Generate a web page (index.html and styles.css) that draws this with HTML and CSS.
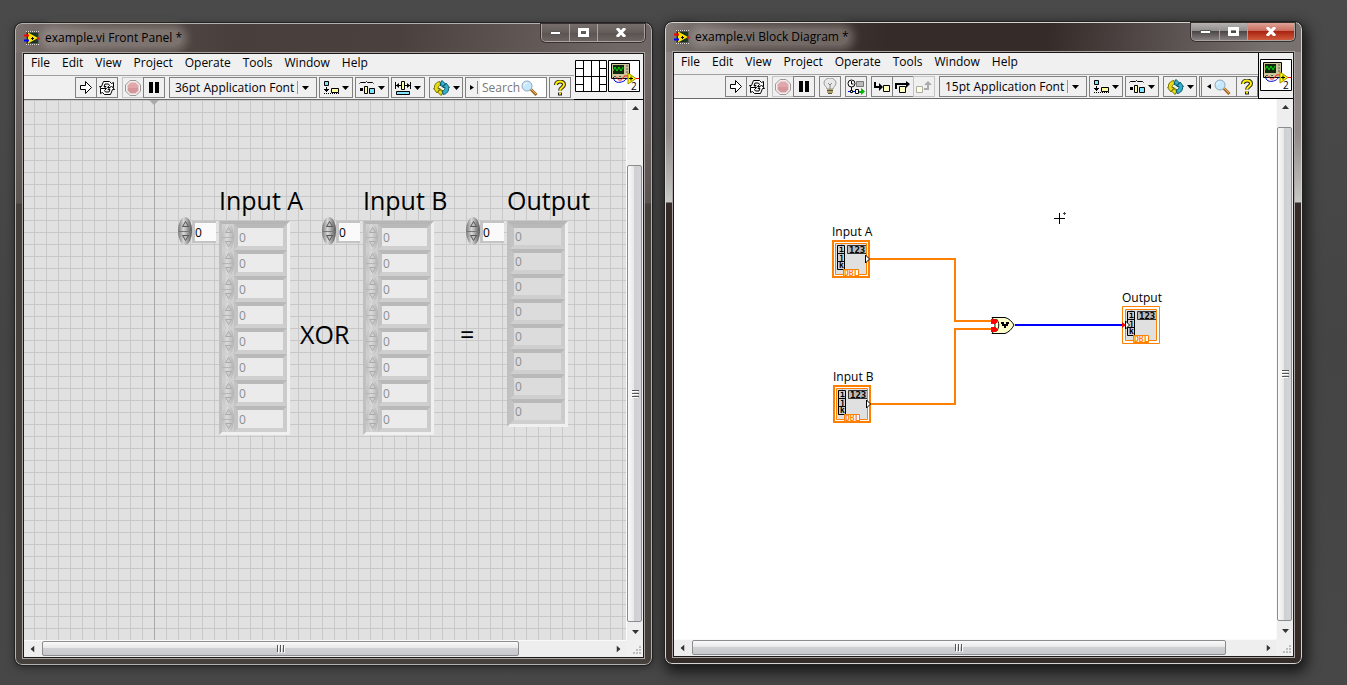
FILE: index.html
```html
<!DOCTYPE html>
<html lang="en">
<head>
    <meta charset="UTF-8">
    <title>example.vi</title>
    <link rel="stylesheet" href="styles.css">
</head>
<body>
<svg class="sprite" aria-hidden="true">
    <symbol id="app" viewBox="0 0 16 14">
        <path d="M2 0h13v14H2z" fill="#555"/>
        <path d="M2 .5h13M2 13.500h13" stroke="#ddd" stroke-dasharray="1 1"/>
        <path d="M3 2h11v10H3z" fill="#14301a"/>
        <path d="M4 1.500l10 5.500-10 5.500z" fill="#ffe500"/>
        <path d="M0 4.500h5M13 7.500h3" stroke="#f00" stroke-width="2"/>
        <path d="M0 9.500h5" stroke="#00f" stroke-width="2"/>
        <path d="M7 7.500h3M8.500 6v3" stroke="#000"/>
    </symbol>
    <symbol id="run" viewBox="0 0 12 13">
        <path d="M.5 4.500h5v-4l6 6-6 6v-4h-5z" fill="#fff" stroke="#000"/>
    </symbol>
    <symbol id="loop" viewBox="0 0 16 14">
        <path d="M.5 5.500h2L4.500.5h6l2 2 2-1v5h-6l2-2-1-1.500H6l-1 2.500h2L3.500 9z" fill="#fff" stroke="#000"/>
        <path d="M15.500 8.500h-2l-2 5h-6l-2-2-2 1v-5h6l-2 2 1 1.500H10l1-2.500H9L12.500 5z" fill="#fff" stroke="#000"/>
    </symbol>
    <symbol id="abort" viewBox="0 0 16 16">
        <path d="M5 .5h6L15.500 5v6L11 15.500H5L.5 11V5z" fill="#f6eeee" stroke="#999"/>
        <path d="M5.500 2.500h5l3 3v5l-3 3h-5l-3-3v-5z" fill="#dfa8ab"/>
        <path d="M3 8h10v2.500L10.500 13h-5L3 10.500z" fill="#d4989c"/>
    </symbol>
    <symbol id="pause" viewBox="0 0 10 11">
        <path d="M0 0h4v11H0zM6 0h4v11H6z" fill="#000"/>
    </symbol>
    <symbol id="bulb" viewBox="0 0 14 17">
        <path d="M4 11C4 9 1 8 1 5a6 5 0 0 1 12 0c0 3-3 4-3 6z" fill="#e9e9e9" stroke="#999"/>
        <path d="M5 5l2 2 2-2M7 7v4" fill="none" stroke="#888"/>
        <path d="M4 11h6v4H4z" fill="#b5a368"/>
        <path d="M4 12.500h6M5 15.500h4" stroke="#554"/>
    </symbol>
    <symbol id="retain" viewBox="0 0 18 16">
        <circle cx="4.500" cy="4.500" r="3.500" fill="#fff" stroke="#000"/>
        <path d="M4.500 2v3h2M4.500 8v5" fill="none" stroke="#000"/>
        <path d="M9.500 2.500h7v5h-7z" fill="#bbb" stroke="#777"/>
        <path d="M1 12.500h11" stroke="#00f"/>
        <path d="M3.500 11.500h2v2h-2zM8.500 10.500h3v4h-3z" fill="#fff" stroke="#000"/>
        <path d="M12 12h2V9l4 3.500-4 3.500v-2h-2z" fill="#00b400"/>
    </symbol>
    <symbol id="into" viewBox="0 0 16 12">
        <path d="M1 1v5h5" fill="none" stroke="#000" stroke-width="2"/>
        <path d="M5 2l4 4-4 4z" fill="#000"/>
        <path d="M9.500 4.500h6v6h-6z" fill="#ffb" stroke="#000"/>
    </symbol>
    <symbol id="over" viewBox="0 0 16 12">
        <path d="M1 8V3h11" fill="none" stroke="#000" stroke-width="2"/>
        <path d="M11 0l4 3-4 4z" fill="#000"/>
        <path d="M4.500 5.500h6v6h-6z" fill="#ffb" stroke="#000"/>
    </symbol>
    <symbol id="out" viewBox="0 0 16 12">
        <path d="M.5 5.500h6v6h-6z" fill="#ffd" stroke="#aaa"/>
        <path d="M8 8h4V4" fill="none" stroke="#aaa" stroke-width="2"/>
        <path d="M8 4l4-4 4 4z" fill="#aaa"/>
    </symbol>
    <symbol id="align" viewBox="0 0 16 14">
        <path d="M1.500.5h4v4h-4z" fill="#7fe5ff" stroke="#000"/>
        <path d="M3.500 6v5M1 8.500h5M2 9.500h3" stroke="#000"/>
        <path d="M1 12.500h15" stroke="#000" stroke-dasharray="1 1"/>
        <path d="M8.500 7.500h7v4h-7z" fill="#ffffa0" stroke="#000"/>
    </symbol>
    <symbol id="spread" viewBox="0 0 16 14">
        <path d="M.5 2.500l1-1h5l1-1 1 1h5l1 1" fill="none" stroke="#000"/>
        <path d="M1 7h3v3H1z" fill="#000"/>
        <path d="M5.500 5.500h3v7h-3z" fill="#ffffa0" stroke="#000"/>
        <path d="M10.500 7.500h5v5h-5z" fill="#7fe5ff" stroke="#000"/>
    </symbol>
    <symbol id="resize" viewBox="0 0 16 14">
        <path d="M.5 1v7M15.500 1v7M1 4.500h5M10 4.500h5" stroke="#000"/>
        <path d="M1 4.500l3-2.500v5zM15 4.500L12 2v5z" fill="#000"/>
        <path d="M6.500.5h3v8h-3z" fill="#ffffa0" stroke="#000"/>
        <path d="M1.500 10.500h13v3h-13z" fill="#7fe5ff" stroke="#000"/>
    </symbol>
    <symbol id="reorder" viewBox="0 0 17 16">
        <path d="M7 1.500C3 2 1 5 1.500 8.500H.5L4 13l3-4.500H5c0-2 1-3 2.500-3.500zM8 15.500L4.500 12 8 9v2c1 0 1.500-.5 1.500-1v3z" fill="#e8dc10" stroke="#7a7200"/>
        <path d="M10 14.500c4-.5 6-3.500 5.500-7h1L13 3l-3 4.500h2c0 2-1 3-2.500 3.500zM9 .5L12.500 4 9 7V5c-1 0-1.500.5-1.500 1V3z" fill="#35b0c8" stroke="#0a5c70"/>
    </symbol>
    <symbol id="lens" viewBox="0 0 17 16">
        <path d="M9.500 9l6 6" stroke="#a06a28" stroke-width="3"/>
        <path d="M10 9l5 5" stroke="#f0b060"/>
        <circle cx="6" cy="6" r="5" fill="#c5e8fb" stroke="#8fa9bd"/>
        <path d="M3 6c0-2 1-3 3-3" fill="none" stroke="#fff"/>
    </symbol>
    <symbol id="help" viewBox="0 0 12 16">
        <path d="M2 5c0-4.500 8-4.500 8-.5 0 3-4 3-4 6M6 12.500v3" fill="none" stroke="#222" stroke-width="4"/>
        <path d="M2 5c0-4.500 8-4.500 8-.5 0 3-4 3-4 6M6 12.500v2" fill="none" stroke="#ffee00" stroke-width="2"/>
    </symbol>
    <symbol id="down" viewBox="0 0 7 4"><path d="M0 0h7L3.500 4z"/></symbol>
    <symbol id="grip" viewBox="0 0 8 8"><path d="M.5 0v7M3.500 0v7M6.500 0v7" stroke="#555"/><path d="M1.500 1v7M4.500 1v7M7.500 1v7" stroke="#fff"/></symbol>
    <symbol id="corner" viewBox="0 0 9 9">
        <path d="M7 0h2v2H7zM7 3h2v2H7zM7 6h2v2H7zM4 3h2v2H4zM4 6h2v2H4zM1 6h2v2H1z" fill="#bdbdbd"/>
    </symbol>
    <symbol id="panes" viewBox="0 0 32 32">
        <path d="M.5.5h31v31H.5zM8.500 0v32M16.500 0v32M24.500 0v32M0 8.500h8M0 16.500h32M0 24.500h8M24 8.500h8M24 24.500h8" fill="#fff" stroke="#000"/>
    </symbol>
    <symbol id="vi" viewBox="0 0 32 32">
        <path d="M.5.5h31v31H.5z" fill="#fff" stroke="#000"/>
        <path d="M3.500 3.500h18v15h-18z" fill="#cfc49a" stroke="#000"/>
        <path d="M5 5h11v9H5z" fill="#102810"/>
        <path d="M5 11l2-4 2 4 2-4 2 4 2-4" fill="none" stroke="#00e000"/>
        <path d="M18 6h2M18 9h2M18 12h2M6 16.500h2M11 16.500h2" stroke="#555"/>
        <path d="M5.500 17c0 5 4 6 8 5s4-3 6-4" fill="none" stroke="#00c"/>
        <path d="M9 17c0 4 5 4 6 1s4-2 5-2M27 18.500h4" fill="none" stroke="#f00"/>
        <path d="M20 13l8 5.500-8 5.500z" fill="#ff0" stroke="#a09000"/>
        <path d="M21 18.500h4M23 16.500v4" stroke="#000"/>
    </symbol>
    <symbol id="terminal" viewBox="0 0 38 38">
        <path d="M4 4h30v30H4z" fill="#e0e0e0"/>
        <path d="M5.500 5.500h7v8h-7zM5.500 13.500h7v8h-7zM5.500 21.500h7v8h-7z" fill="#d0d0d0" stroke="#000"/>
        <path d="M34 5.500H15.500v8H34" fill="#bbb" stroke="#333"/>
        <path d="M3.500 3.500h31v31h-31z" fill="none" stroke="#ff8000"/>
        <path d="M11.500 29.500h15v7h-15z" fill="#fff" stroke="#ff8000"/>
    </symbol>
</svg>

<main class="desktop">
    <section class="window front">
        <header class="titlebar">
            <svg class="app-icon"><use href="#app"/></svg>
            <h1>example.vi Front Panel *</h1>
            <div class="caption">
                <button aria-label="Minimize"><svg width="11" height="4"><path d="M.5.5h10v3H.5z" fill="#fff" stroke="#555"/></svg></button>
                <button aria-label="Maximize"><svg width="11" height="9"><path d="M0 0h11v9H0zM3 3v3h5V3z" fill="#fff" fill-rule="evenodd"/></svg></button>
                <button class="close" aria-label="Close"><svg width="10" height="9"><path d="M1 0l8 9M9 0L1 9" stroke="#fff" stroke-width="3"/></svg></button>
            </div>
        </header>
        <div class="client">
            <div class="head">
                <div class="bars">
                    <nav class="menu">
                        <button>File</button><button>Edit</button><button>View</button><button>Project</button><button>Operate</button><button>Tools</button><button>Window</button><button>Help</button>
                    </nav>
                    <div class="toolbar">
                        <div class="joined">
                            <button class="tool" aria-label="Run"><svg width="12" height="13"><use href="#run"/></svg></button>
                            <button class="tool" aria-label="Run Continuously"><svg width="16" height="14"><use href="#loop"/></svg></button>
                        </div>
                        <div class="joined">
                            <button class="tool off" aria-label="Abort" disabled><svg width="16" height="16"><use href="#abort"/></svg></button>
                            <button class="tool" aria-label="Pause"><svg width="10" height="11"><use href="#pause"/></svg></button>
                        </div>
                        <div class="group">
                            <div class="font-box">
                                <select aria-label="Text Settings"><option>36pt Application Font</option></select>
                                <span class="rule"></span>
                                <svg width="7" height="4"><use href="#down"/></svg>
                            </div>
                            <button class="tool wide" aria-label="Align Objects"><svg width="16" height="14"><use href="#align"/></svg><svg width="7" height="4"><use href="#down"/></svg></button>
                            <button class="tool wide" aria-label="Distribute Objects"><svg width="16" height="14"><use href="#spread"/></svg><svg width="7" height="4"><use href="#down"/></svg></button>
                            <button class="tool wide" aria-label="Resize Objects"><svg width="16" height="14"><use href="#resize"/></svg><svg width="7" height="4"><use href="#down"/></svg></button>
                        </div>
                        <div class="group">
                            <button class="tool wide" aria-label="Reorder"><svg width="17" height="16"><use href="#reorder"/></svg><svg width="7" height="4"><use href="#down"/></svg></button>
                            <div class="search">
                                <svg width="8" height="13"><path d="M0 4v5l4-2.500z"/><path d="M7.500 0v13" stroke="#888"/></svg>
                                <input type="text" placeholder="Search" aria-label="Search">
                                <svg width="17" height="16"><use href="#lens"/></svg>
                            </div>
                            <button class="tool" aria-label="Context Help"><svg width="12" height="16"><use href="#help"/></svg></button>
                        </div>
                    </div>
                </div>
                <div class="icons">
                    <svg width="32" height="32"><use href="#panes"/></svg>
                    <svg width="32" height="32"><use href="#vi"/><text x="23" y="30" class="vi-num">2</text></svg>
                </div>
            </div>
            <div class="body">
                <div class="canvas panel">
                    <div class="origin"></div>
                    <div class="array array-a" data-name="Input A"></div>
                    <div class="array array-b" data-name="Input B"></div>
                    <div class="array array-out" data-name="Output"></div>
                    <p class="caption-text xor">XOR</p>
                    <p class="caption-text equals">=</p>
                </div>
                <div class="scroll-v">
                    <button aria-label="Scroll up"><svg class="up" width="7" height="4"><use href="#down"/></svg></button>
                    <div class="track"><div class="thumb"><svg width="8" height="8"><use href="#grip"/></svg></div></div>
                    <button aria-label="Scroll down"><svg width="7" height="4"><use href="#down"/></svg></button>
                </div>
                <div class="scroll-h">
                    <button aria-label="Scroll left"><svg class="left" width="7" height="4"><use href="#down"/></svg></button>
                    <div class="track"><div class="thumb"><svg width="8" height="8"><use href="#grip"/></svg></div></div>
                    <button aria-label="Scroll right"><svg class="right" width="7" height="4"><use href="#down"/></svg></button>
                </div>
                <div class="corner"><svg width="9" height="9"><use href="#corner"/></svg></div>
            </div>
        </div>
    </section>

    <section class="window block active">
        <header class="titlebar">
            <svg class="app-icon"><use href="#app"/></svg>
            <h1>example.vi Block Diagram *</h1>
            <div class="caption">
                <button aria-label="Minimize"><svg width="11" height="4"><path d="M.5.5h10v3H.5z" fill="#fff" stroke="#555"/></svg></button>
                <button aria-label="Maximize"><svg width="11" height="9"><path d="M0 0h11v9H0zM3 3v3h5V3z" fill="#fff" fill-rule="evenodd"/></svg></button>
                <button class="close" aria-label="Close"><svg width="10" height="9"><path d="M1 0l8 9M9 0L1 9" stroke="#fff" stroke-width="3"/></svg></button>
            </div>
        </header>
        <div class="client">
            <div class="head">
                <div class="bars">
                    <nav class="menu">
                        <button>File</button><button>Edit</button><button>View</button><button>Project</button><button>Operate</button><button>Tools</button><button>Window</button><button>Help</button>
                    </nav>
                    <div class="toolbar">
                        <div class="joined">
                            <button class="tool" aria-label="Run"><svg width="12" height="13"><use href="#run"/></svg></button>
                            <button class="tool" aria-label="Run Continuously"><svg width="16" height="14"><use href="#loop"/></svg></button>
                        </div>
                        <div class="joined">
                            <button class="tool off" aria-label="Abort" disabled><svg width="16" height="16"><use href="#abort"/></svg></button>
                            <button class="tool" aria-label="Pause"><svg width="10" height="11"><use href="#pause"/></svg></button>
                        </div>
                        <button class="tool" aria-label="Highlight Execution"><svg width="14" height="17"><use href="#bulb"/></svg></button>
                        <button class="tool" aria-label="Retain Wire Values"><svg width="18" height="16"><use href="#retain"/></svg></button>
                        <div class="joined">
                            <button class="tool" aria-label="Step Into"><svg width="16" height="12"><use href="#into"/></svg></button>
                            <button class="tool" aria-label="Step Over"><svg width="16" height="12"><use href="#over"/></svg></button>
                            <button class="tool off" aria-label="Step Out" disabled><svg width="16" height="12"><use href="#out"/></svg></button>
                        </div>
                        <div class="group">
                            <div class="font-box">
                                <select aria-label="Text Settings"><option>15pt Application Font</option></select>
                                <span class="rule"></span>
                                <svg width="7" height="4"><use href="#down"/></svg>
                            </div>
                            <button class="tool wide" aria-label="Align Objects"><svg width="16" height="14"><use href="#align"/></svg><svg width="7" height="4"><use href="#down"/></svg></button>
                            <button class="tool wide" aria-label="Distribute Objects"><svg width="16" height="14"><use href="#spread"/></svg><svg width="7" height="4"><use href="#down"/></svg></button>
                        </div>
                        <div class="group">
                            <button class="tool wide" aria-label="Reorder"><svg width="17" height="16"><use href="#reorder"/></svg><svg width="7" height="4"><use href="#down"/></svg></button>
                            <div class="joined">
                                <button class="tool find" aria-label="Search"><svg width="4" height="5"><path d="M4 0v5L0 2.500z"/></svg><svg width="17" height="16"><use href="#lens"/></svg></button>
                                <button class="tool" aria-label="Context Help"><svg width="12" height="16"><use href="#help"/></svg></button>
                            </div>
                        </div>
                    </div>
                </div>
                <div class="icons">
                    <svg width="32" height="32"><use href="#vi"/><text x="23" y="30" class="vi-num">2</text></svg>
                </div>
            </div>
            <div class="body">
                <div class="canvas diagram">
                    <svg class="wires" width="560" height="400">
                        <path d="M195 160h86v62h38M196 305h85v-75h38" fill="none" stroke="#ff8000" stroke-width="2"/>
                        <path d="M341 226h109" stroke="#00f" stroke-width="2"/>
                        <path d="M318 218.500h13c4 1 7 4 9 7.500-2 4-5 7-9 8.500h-13c4-5 4-11 0-16z" fill="#ffffcc" stroke="#000"/>
                        <path d="M322.500 220c3 4 3 8 0 12.500" fill="none" stroke="#000"/>
                        <path d="M327 223h3v2h2v-2h3v2h-1v2h-2v2h-2v-2h-2v-2h-1z" fill="#000"/>
                        <path d="M317 220h5v1h1v3h-1v1h-5zM317 228h5v1h1v3h-1v1h-5z" fill="#f00"/>
                        <path d="M380 119.500h11M385.500 114v11" stroke="#000"/>
                        <path d="M390 113h1v1h1v1h-1v1h-1v-1h-1v-1h1z" fill="#444"/>
                    </svg>
                </div>
                <div class="scroll-v">
                    <button aria-label="Scroll up"><svg class="up" width="7" height="4"><use href="#down"/></svg></button>
                    <div class="track"><div class="thumb"><svg width="8" height="8"><use href="#grip"/></svg></div></div>
                    <button aria-label="Scroll down"><svg width="7" height="4"><use href="#down"/></svg></button>
                </div>
                <div class="scroll-h">
                    <button aria-label="Scroll left"><svg class="left" width="7" height="4"><use href="#down"/></svg></button>
                    <div class="track"><div class="thumb"><svg width="8" height="8"><use href="#grip"/></svg></div></div>
                    <button aria-label="Scroll right"><svg class="right" width="7" height="4"><use href="#down"/></svg></button>
                </div>
                <div class="corner"><svg width="9" height="9"><use href="#corner"/></svg></div>
            </div>
        </div>
    </section>
</main>

<script>
    const up = '<svg width="7" height="6"><path d="M.5 5.500l3-5 3 5z"/></svg>';
    const down = '<svg width="7" height="6"><path d="M.5.5h6l-3 5z"/></svg>';

    function spinner(label, disabled) {
        return `<div class="spinner">
                    <button aria-label="${label} up" ${disabled}>${up}</button>
                    <button aria-label="${label} down" ${disabled}>${down}</button>
                </div>`;
    }

    function displayArray(array) {
        let name = array.dataset.name;
        let result = `<div class="index">${spinner(name + " index", "")}
                          <input type="text" value="0" aria-label="${name} index">
                      </div>
                      <div class="elements"><h2>${name}</h2><div class="frame">`;
        for (let i = 0; i < 8; i++) {
            result += '<div class="element">';
            if (name !== "Output") {
                result += spinner(name + " " + i, "disabled");
            }
            result += `<input type="text" value="0" aria-label="${name} ${i}" disabled></div>`;
        }
        result += "</div></div>";
        array.innerHTML = result;
    }

    function displayNode(name, place) {
        let border = '<path d="M1 1h36v36H1z" fill="none" stroke="#ff8000" stroke-width="2"/><path d="M33.500 15v8l4-4z" fill="#fff" stroke="#000"/>';
        if (name === "Output") {
            border = '<path d="M.5.5h37v37H.5z" fill="none" stroke="#ff8000"/><path d="M0 16l4 3-4 3z" fill="#f00"/><path d="M3.500 15v8l4-4z" fill="#fff" stroke="#000"/>';
        }
        return `<div class="node ${place}">
                    <span>${name}</span>
                    <svg width="38" height="38">
                        <use href="#terminal"/>
                        <text x="7" y="12" class="tiny">i</text>
                        <text x="7" y="20" class="tiny">j</text>
                        <text x="7" y="28" class="tiny">k</text>
                        <text x="17" y="13" class="tiny digits">123</text>
                        <text x="12" y="36" class="tiny dbl">DBL</text>
                        ${border}
                    </svg>
                </div>`;
    }

    document.querySelectorAll(".array").forEach(displayArray);
    document.querySelector(".diagram").insertAdjacentHTML("beforeend",
        displayNode("Input A", "node-a") + displayNode("Input B", "node-b") + displayNode("Output", "node-out"));
</script>
</body>
</html>
```
FILE: styles.css
```css
* {
    box-sizing: border-box;
}

body {
    margin: 0;
    font-family: "Open Sans", "Noto Sans", sans-serif;
    font-size: 12px;
    color: #000;
    background: #484848;
}

button, input, select {
    font: inherit;
    color: inherit;
    margin: 0;
    padding: 0;
    border: none;
    border-radius: 0;
    background: none;
}

svg {
    display: block;
    flex: none;
}

h1, h2, p {
    margin: 0;
    font-weight: normal;
}

.sprite {
    display: none;
}

.desktop {
    display: flex;
    gap: 13px;
    height: 100vh;
    min-height: 500px;
    padding: 22px 45px 20px 15px;
    background: linear-gradient(#4a4a4a, #444 50%, #474747);
}

/* windows */
.window {
    flex: 1;
    min-width: 0;
    display: flex;
    flex-direction: column;
    padding: 0 6px 6px;
    border: 1px solid #b5b1ae;
    border-radius: 7px;
    outline: 1px solid #222;
}

.front {
    margin-top: 1px;
    background: linear-gradient(100deg, #7d7471, #594f4c 12%, #483e3b 35%, #4a413e 60%, #706866 95%) 0 0 / 100% 29px no-repeat,
        linear-gradient(#787170, #5b5350 179px, #46403d 180px);
    box-shadow: 0 2px 8px rgba(0, 0, 0, 0.5);
}

.block {
    margin-bottom: 1px;
    border-color: #d5d3d1;
    background: linear-gradient(100deg, #857e7b, #4c4340 12%, #352b29 35%, #352b29 60%, #777170 95%) 0 0 / 100% 29px no-repeat,
        linear-gradient(#878180, #8f8987 110px, #c8c8c6 179px, #352c29 180px);
    box-shadow: 2px 5px 14px 3px rgba(0, 0, 0, 0.7);
}

.titlebar {
    display: flex;
    align-items: flex-start;
    height: 28px;
}

.app-icon {
    width: 16px;
    height: 14px;
    margin: 7px 5px 0 2px;
}

.titlebar h1 {
    font-size: 12px;
    line-height: 16px;
    margin-top: 6px;
    border-radius: 8px;
    background: rgba(190, 182, 178, 0.4);
    box-shadow: 0 0 8px 5px rgba(190, 182, 178, 0.4);
}

.caption {
    display: flex;
    margin-left: auto;
    border: 1px solid #aaa4a1;
    border-top: none;
    border-radius: 0 0 5px 5px;
    box-shadow: 0 0 0 1px #38302e;
    overflow: hidden;
}

.caption button {
    display: flex;
    align-items: center;
    justify-content: center;
    width: 28px;
    height: 17px;
    border-right: 1px solid #aaa4a1;
    background: linear-gradient(#766e6b, #645c59 50%, #5a5250 50%, #6c6461);
}

.caption button.close {
    width: 46px;
    border-right: none;
}

.active .caption button {
    background: linear-gradient(#b5b2b1, #8e8a88 50%, #4c4746 50%, #868180);
}

.active .caption button.close {
    background: linear-gradient(#dfa498, #c9695a 48%, #ab2411 50%, #cf5a3c);
}

.client {
    flex: 1;
    min-height: 0;
    display: flex;
    flex-direction: column;
    border: 1px solid #1c1817;
    outline: 1px solid #aaa5a2;
    margin: 1px 1px 0;
    background: #f0f0f0;
}

/* menu and toolbar */
.head {
    display: flex;
    height: 46px;
    border-bottom: 1px solid #6b6b6b;
}

.bars {
    flex: 1;
    min-width: 0;
}

.menu {
    display: flex;
    gap: 12px;
    height: 22px;
    padding: 0 7px 4px;
    border-bottom: 1px solid #a0a0a0;
}

.toolbar {
    display: flex;
    gap: 4px;
    padding: 1px 0 0 51px;
}

.group {
    display: flex;
    gap: 2px;
}

.joined {
    display: flex;
}

.joined .tool + .tool {
    margin-left: -1px;
}

.tool {
    display: flex;
    flex: none;
    align-items: center;
    justify-content: center;
    gap: 3px;
    width: 22px;
    height: 21px;
    border: 1px solid #808080;
}

.tool.off {
    border-color: #c4c4c4;
}

.tool.wide {
    width: 34px;
}

.tool.find {
    width: 38px;
    border-left: 3px double #808080;
}

.font-box {
    display: flex;
    align-items: center;
    width: 148px;
    height: 21px;
    padding: 0 7px 0 5px;
    border: 1px solid #808080;
}

.font-box select {
    flex: 1;
    min-width: 0;
    height: 17px;
    line-height: 17px;
    appearance: none;
}

.rule {
    flex: none;
    width: 1px;
    height: 13px;
    margin-right: 4px;
    background: #999;
}

.search {
    display: flex;
    align-items: center;
    width: 82px;
    height: 21px;
    padding: 0 8px 0 4px;
    border: 1px solid #808080;
    background: linear-gradient(90deg, #f0f0f0 14px, #fff 14px);
}

.search input {
    flex: 1;
    min-width: 0;
    padding-left: 4px;
    outline: none;
}

.search input::placeholder {
    color: #777;
    opacity: 1;
}

.icons {
    display: flex;
    gap: 1px;
    height: 46px;
    padding: 6px 3px 0 1px;
    border-bottom: 1px solid #000;
}

.block .icons {
    padding: 6px 1px 0 1px;
    border-left: 1px solid #000;
}

.vi-num {
    font-size: 10px;
}

/* canvas and scroll bars */
.body {
    flex: 1;
    min-height: 0;
    display: grid;
    grid-template: 1fr 17px / 1fr 17px;
}

.canvas {
    position: relative;
    overflow: hidden;
    background: #fff;
}

.panel {
    background: linear-gradient(#c8c8c8 1px, transparent 1px) 0 0 / 12px 12px,
        linear-gradient(90deg, #c8c8c8 1px, transparent 1px) 10px 0 / 12px 12px,
        #e1e1e1;
}

.origin {
    position: absolute;
    left: 130px;
    top: 0;
    bottom: 0;
    width: 1px;
    background: #a9a9a9;
}

.origin::before {
    content: "";
    position: absolute;
    left: -5px;
    border: 5px solid transparent;
    border-top-color: #aaa;
    border-bottom: none;
}

.scroll-v, .scroll-h {
    display: flex;
    background: #eee;
}

.scroll-v {
    flex-direction: column;
    border-left: 1px solid #fafafa;
}

.scroll-h {
    border-top: 1px solid #fafafa;
}

.scroll-v button, .scroll-h button {
    display: flex;
    flex: none;
    align-items: center;
    justify-content: center;
    width: 16px;
    height: 16px;
    fill: #333;
}

.scroll-v .track {
    flex: 1;
    padding-bottom: 2px;
}

.front .scroll-v .track {
    padding-top: 49px;
}

.block .scroll-v .track {
    padding-top: 12px;
}

.scroll-h .track {
    flex: 1;
    padding-left: 2px;
}

.thumb {
    display: flex;
    align-items: center;
    justify-content: center;
    border: 1px solid #8c8c8e;
    border-radius: 2px;
}

.scroll-v .thumb {
    width: 15px;
    height: 100%;
    background: linear-gradient(90deg, #fafafa, #e8e8ea 45%, #cfd0d2 50%, #d4d4d8);
}

.scroll-v .thumb svg {
    transform: rotate(90deg);
}

.scroll-h .thumb {
    height: 15px;
    background: linear-gradient(#fafafa, #e8e8ea 45%, #cfd0d2 50%, #c8c9cc);
}

.front .scroll-h .thumb {
    width: 84%;
}

.block .scroll-h .thumb {
    width: 94%;
}

.up {
    transform: rotate(180deg);
}

.left {
    transform: rotate(90deg);
}

.right {
    transform: rotate(-90deg);
}

.corner {
    display: flex;
    align-items: flex-end;
    justify-content: flex-end;
    padding: 2px;
}

/* front panel controls */
.array {
    position: absolute;
    top: 83px;
    display: flex;
    align-items: flex-start;
    gap: 3px;
}

.array-a {
    left: 154px;
}

.array-b {
    left: 298px;
}

.array-out {
    left: 442px;
}

.array h2, .caption-text {
    font-size: 25px;
    line-height: 34px;
    white-space: nowrap;
}

.array h2 {
    height: 38px;
}

.index, .element {
    display: flex;
}

.index {
    margin-top: 34px;
}

.spinner {
    display: flex;
    flex-direction: column;
    flex: none;
    width: 14px;
    height: 28px;
    border-radius: 50%;
    overflow: hidden;
    background: linear-gradient(90deg, #777, #d8d8d8 40%, #b0b0b0 60%, #555);
}

.spinner button {
    display: flex;
    flex: 1;
    align-items: center;
    justify-content: center;
    fill: #bbb;
    stroke: #555;
}

.spinner button + button {
    border-top: 1px solid #777;
}

.index input {
    width: 24px;
    height: 22px;
    margin-top: 4px;
    line-height: 18px;
    border: 2px solid #c4c4c4;
    border-width: 2px 0 2px 3px;
    background: #fafafa;
}

.elements {
    width: 72px;
}

.frame {
    width: 71px;
    border: 3px solid;
    border-color: #b6b6b6 #f0f0f0 #f0f0f0 #c0c0c0;
    background: #cfcfcf;
}

.element {
    height: 26px;
}

.element .spinner {
    width: 12px;
    height: 26px;
    background: linear-gradient(90deg, #bbb, #dadada 40%, #cfcfcf 60%, #b0b0b0);
}

.element .spinner button {
    fill: #d0d0d0;
    stroke: #aaa;
}

.element .spinner button + button {
    border-color: #b5b5b5;
}

.element input {
    flex: 1;
    min-width: 0;
    height: 26px;
    padding: 0 1px;
    border: 4px solid;
    border-color: #b9b9b9 #cbcbcb #cfcfcf #c3c3c3;
    background: #ebebeb;
    color: #8a9090;
}

.array-out .frame {
    width: 61px;
}

.array-out .element {
    height: 25px;
}

.array-out .element input {
    height: 25px;
    background: #dcdcdc;
}

.xor {
    position: absolute;
    left: 276px;
    top: 217px;
}

.equals {
    position: absolute;
    left: 436px;
    top: 217px;
}

/* block diagram */
.wires {
    position: absolute;
    left: 0;
    top: 0;
}

.node {
    position: absolute;
    white-space: nowrap;
}

.node span {
    display: block;
    line-height: 17px;
}

.node-a {
    left: 158px;
    top: 124px;
}

.node-b {
    left: 159px;
    top: 269px;
}

.node-out {
    left: 448px;
    top: 190px;
}

.tiny {
    font: bold 8px "DejaVu Sans Mono", monospace;
}

.digits {
    font-size: 9px;
}

.dbl {
    fill: #ff8000;
}
```
